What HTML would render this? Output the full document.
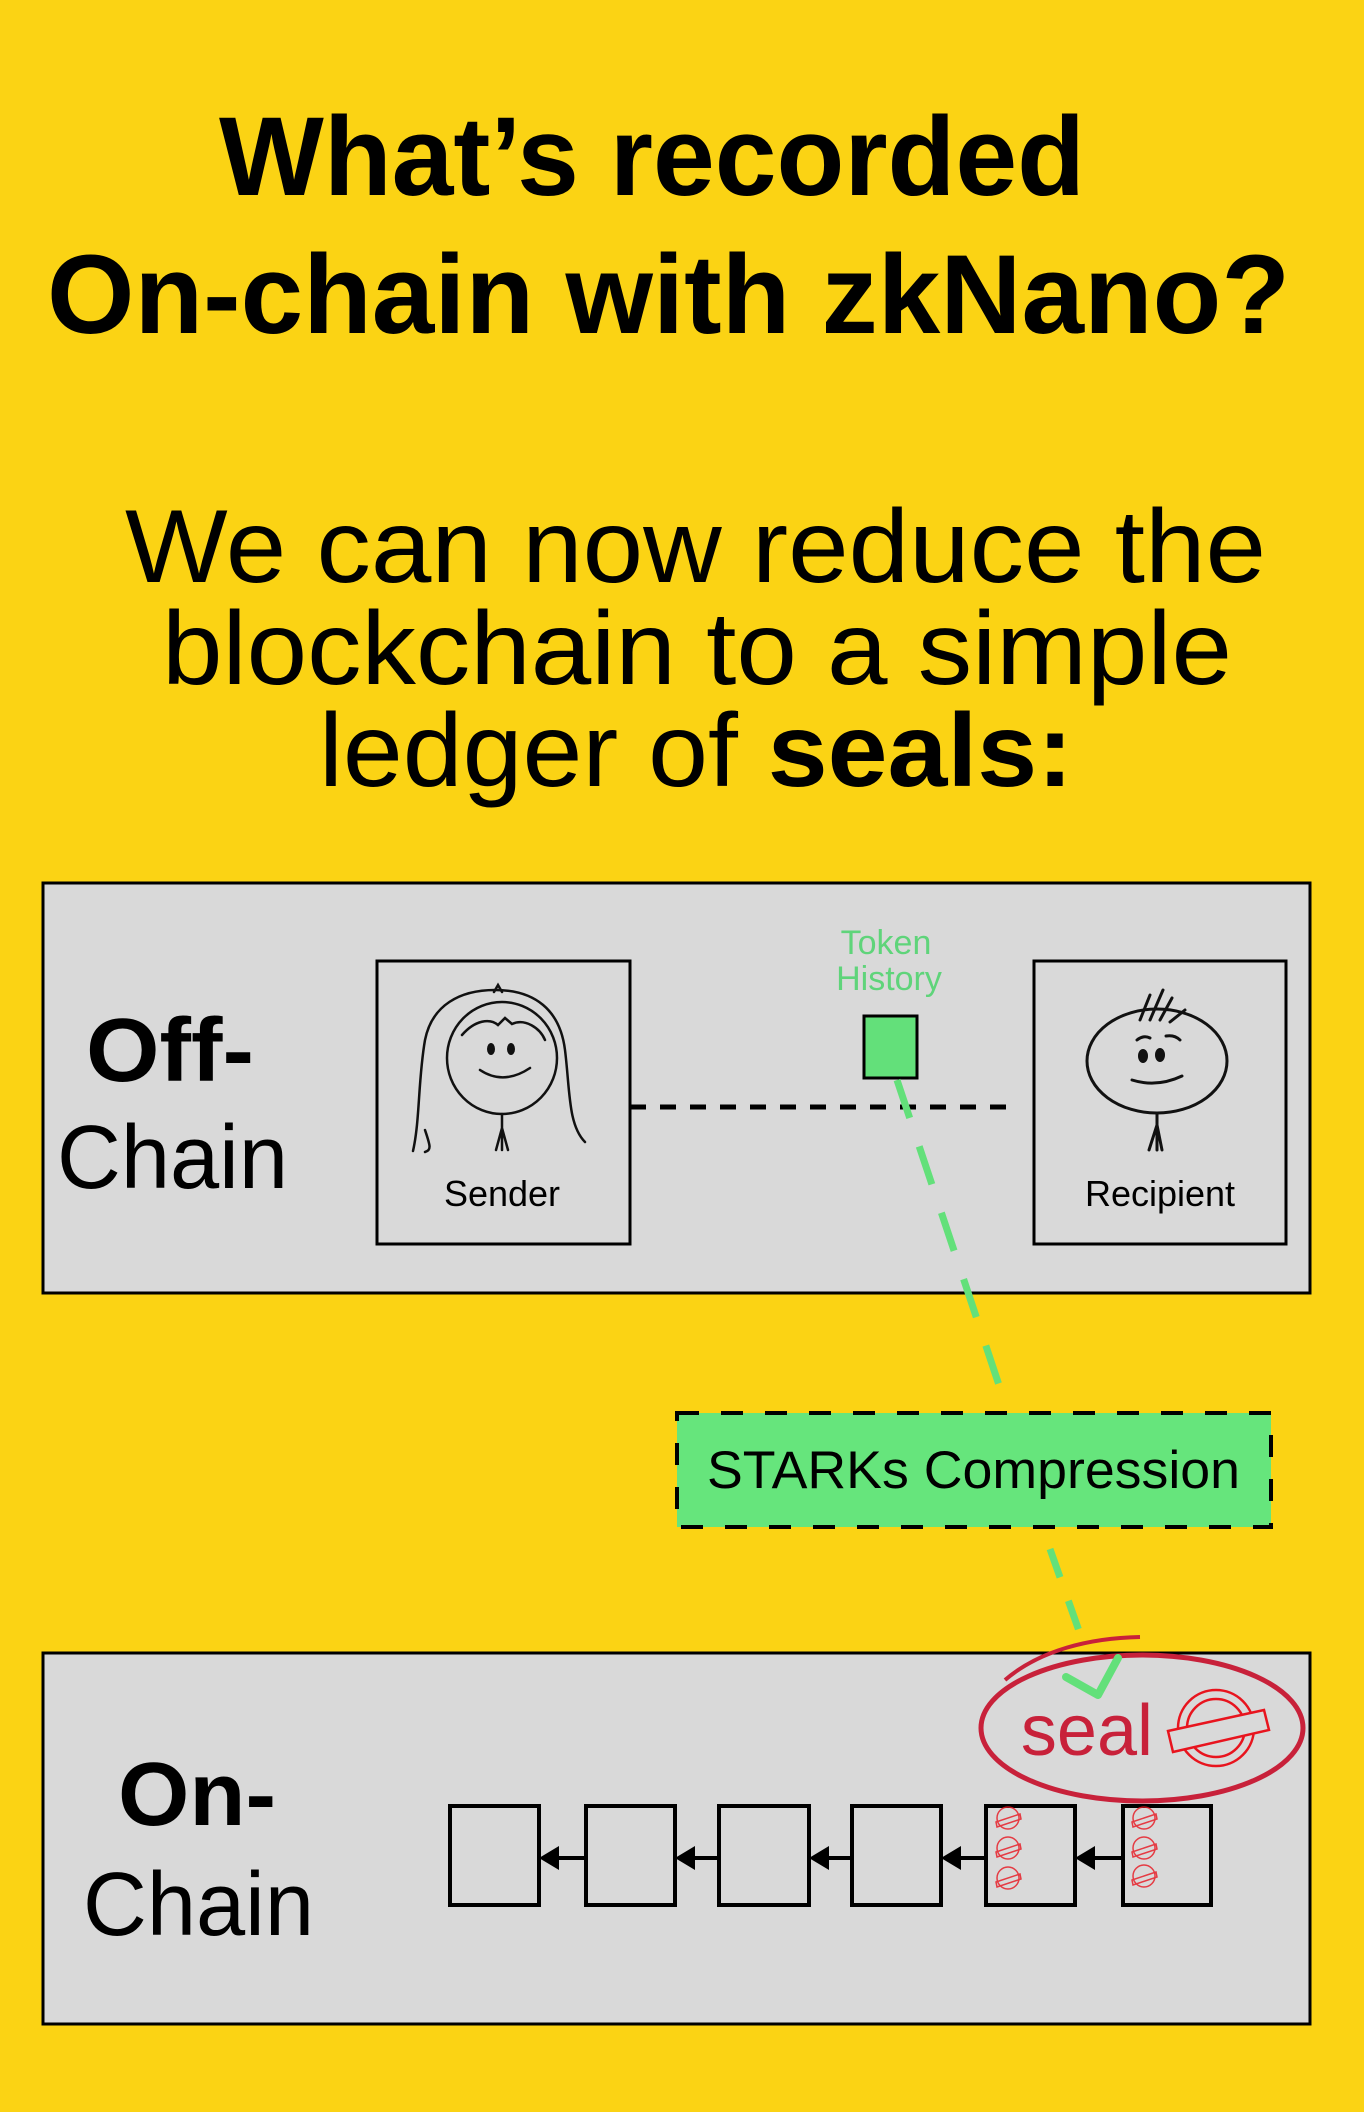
<!DOCTYPE html>
<html><head><meta charset="utf-8"><style>
html,body{margin:0;padding:0;background:#FBD314;}
svg{display:block}
text{font-family:"Liberation Sans",sans-serif;}
</style></head><body>
<svg width="1364" height="2112" viewBox="0 0 1364 2112" xmlns="http://www.w3.org/2000/svg">
<rect width="1364" height="2112" fill="#FBD314"/>
<!-- Title -->
<text x="219" y="195" font-size="112" font-weight="bold" textLength="866" lengthAdjust="spacingAndGlyphs">What’s recorded</text>
<text x="47" y="333" font-size="112" font-weight="bold" textLength="1243" lengthAdjust="spacingAndGlyphs">On-chain with zkNano?</text>
<!-- Subtitle -->
<text x="125" y="582" font-size="104" textLength="1141" lengthAdjust="spacingAndGlyphs">We can now reduce the</text>
<text x="162" y="684" font-size="104" textLength="1070" lengthAdjust="spacingAndGlyphs">blockchain to a simple</text>
<text x="319" y="786" font-size="104" textLength="754" lengthAdjust="spacingAndGlyphs">ledger of <tspan font-weight="bold">seals:</tspan></text>

<!-- Off-chain box -->
<rect x="43" y="883" width="1267" height="410" fill="#D9D9D9" stroke="#000" stroke-width="3"/>
<text x="86" y="1081" font-size="90" font-weight="bold" textLength="168" lengthAdjust="spacingAndGlyphs">Off-</text>
<text x="57" y="1188" font-size="90" textLength="231" lengthAdjust="spacingAndGlyphs">Chain</text>

<rect x="377" y="961" width="253" height="283" fill="#D9D9D9" stroke="#000" stroke-width="3"/>
<rect x="1034" y="961" width="252" height="283" fill="#D9D9D9" stroke="#000" stroke-width="3"/>
<text x="502" y="1206" font-size="36" text-anchor="middle">Sender</text>
<text x="1160" y="1206" font-size="36" text-anchor="middle">Recipient</text>

<!-- sender face -->
<g fill="none" stroke="#111" stroke-width="2.5" stroke-linecap="round">
<path d="M413 1151 C420 1120 418 1080 425 1040 C432 1005 460 990 495 990 C535 990 560 1010 565 1050 C570 1090 568 1125 585 1142"/>
<path d="M494 992 L498 985 L502 992"/>
<ellipse cx="502" cy="1058" rx="55" ry="56"/>
<path d="M462 1035 C475 1020 490 1018 498 1025 L505 1018 L512 1024 C525 1018 540 1028 545 1040"/>
<path d="M480 1070 C495 1080 512 1080 530 1068"/>
<path d="M502 1114 L502 1150 M496 1150 L502 1128 L508 1150"/>
<path d="M425 1130 C430 1145 432 1150 425 1152"/>
</g>
<ellipse cx="491" cy="1049" rx="4" ry="6" fill="#111"/>
<ellipse cx="511" cy="1049" rx="4" ry="6" fill="#111"/>
<!-- recipient face -->
<g fill="none" stroke="#111" stroke-width="3" stroke-linecap="round">
<ellipse cx="1157" cy="1061" rx="70" ry="52"/>
<path d="M1140 1020 L1150 995 M1150 1020 L1163 990 M1160 1020 L1172 998 M1170 1022 L1185 1010"/>
<path d="M1137 1040 C1142 1036 1146 1036 1150 1038 M1166 1036 C1172 1035 1177 1037 1180 1040"/>
<path d="M1132 1080 C1148 1085 1165 1084 1182 1076"/>
<path d="M1157 1113 L1157 1150 M1149 1150 L1157 1125 L1162 1150"/>
</g>
<ellipse cx="1143" cy="1056" rx="5" ry="7" fill="#111"/>
<ellipse cx="1160" cy="1055" rx="5" ry="7" fill="#111"/>

<!-- dashed link -->
<line x1="630" y1="1107" x2="1020" y2="1107" stroke="#000" stroke-width="5" stroke-dasharray="16 14"/>
<text x="886" y="954" font-size="34" fill="#5FD47A" text-anchor="middle">Token</text>
<text x="889" y="990" font-size="34" fill="#5FD47A" text-anchor="middle">History</text>
<rect x="864" y="1016" width="53" height="62" fill="#63E07A" stroke="#000" stroke-width="3"/>
<line x1="897" y1="1080" x2="1004" y2="1400" stroke="#63E07A" stroke-width="7" stroke-dasharray="40 30"/>

<!-- STARKs box -->
<rect x="677" y="1413" width="594" height="114" fill="#66E57C" stroke="#000" stroke-width="4" stroke-dasharray="22 22"/>
<text x="707" y="1488" font-size="53" textLength="533" lengthAdjust="spacingAndGlyphs">STARKs Compression</text>
<line x1="1050" y1="1549" x2="1084" y2="1645" stroke="#63E07A" stroke-width="7" stroke-dasharray="30 25"/>

<!-- On-chain box -->
<rect x="43" y="1653" width="1267" height="371" fill="#D9D9D9" stroke="#000" stroke-width="3"/>
<text x="118" y="1825" font-size="90" font-weight="bold" textLength="158" lengthAdjust="spacingAndGlyphs">On-</text>
<text x="83" y="1935" font-size="90" textLength="231" lengthAdjust="spacingAndGlyphs">Chain</text>

<!-- seal -->
<ellipse cx="1142" cy="1728" rx="161" ry="73" fill="none" stroke="#C8213A" stroke-width="5"/>
<path d="M1005 1680 C1040 1650 1090 1638 1140 1637" fill="none" stroke="#C8213A" stroke-width="4"/>
<path d="M1066 1677 L1098 1695 L1118 1658" fill="none" stroke="#63E07A" stroke-width="8" stroke-linecap="round" stroke-linejoin="round"/>
<text x="1153" y="1755" font-size="72" fill="#C8213A" text-anchor="end">seal</text>
<g fill="none" stroke="#E8141E" stroke-width="2.5">
<circle cx="1216" cy="1728" r="38"/>
<circle cx="1216" cy="1728" r="29"/>
<path d="M1168 1731 L1264 1710 L1269 1730 L1173 1752 Z" fill="#D9D9D9"/>
</g>

<!-- chain -->
<g fill="#D9D9D9" stroke="#000" stroke-width="4">
<rect x="450" y="1806" width="89" height="99"/>
<rect x="586" y="1806" width="89" height="99"/>
<rect x="719" y="1806" width="90" height="99"/>
<rect x="852" y="1806" width="89" height="99"/>
<rect x="986" y="1806" width="89" height="99"/>
<rect x="1123" y="1806" width="88" height="99"/>
</g>
<g stroke="#000" stroke-width="4">
<line x1="550" y1="1858" x2="586" y2="1858"/>
<line x1="686" y1="1858" x2="719" y2="1858"/>
<line x1="820" y1="1858" x2="852" y2="1858"/>
<line x1="952" y1="1858" x2="986" y2="1858"/>
<line x1="1086" y1="1858" x2="1123" y2="1858"/>
</g>
<g fill="#000">
<path d="M539 1858 L559 1846 L559 1870 Z"/>
<path d="M675 1858 L695 1846 L695 1870 Z"/>
<path d="M809 1858 L829 1846 L829 1870 Z"/>
<path d="M941 1858 L961 1846 L961 1870 Z"/>
<path d="M1075 1858 L1095 1846 L1095 1870 Z"/>
</g>
<g fill="none" stroke="#E8141E" stroke-width="1.5" opacity="0.8">
<circle cx="1008" cy="1818" r="11"/><path d="M996 1822 L1020 1814 L1021 1819 L997 1827 Z"/>
<circle cx="1008" cy="1848" r="11"/><path d="M996 1852 L1020 1844 L1021 1849 L997 1857 Z"/>
<circle cx="1008" cy="1878" r="11"/><path d="M996 1882 L1020 1874 L1021 1879 L997 1887 Z"/>
<circle cx="1144" cy="1818" r="11"/><path d="M1132 1822 L1156 1814 L1157 1819 L1133 1827 Z"/>
<circle cx="1144" cy="1848" r="11"/><path d="M1132 1852 L1156 1844 L1157 1849 L1133 1857 Z"/>
<circle cx="1144" cy="1876" r="11"/><path d="M1132 1880 L1156 1872 L1157 1877 L1133 1885 Z"/>
</g>
</svg>
</body></html>
